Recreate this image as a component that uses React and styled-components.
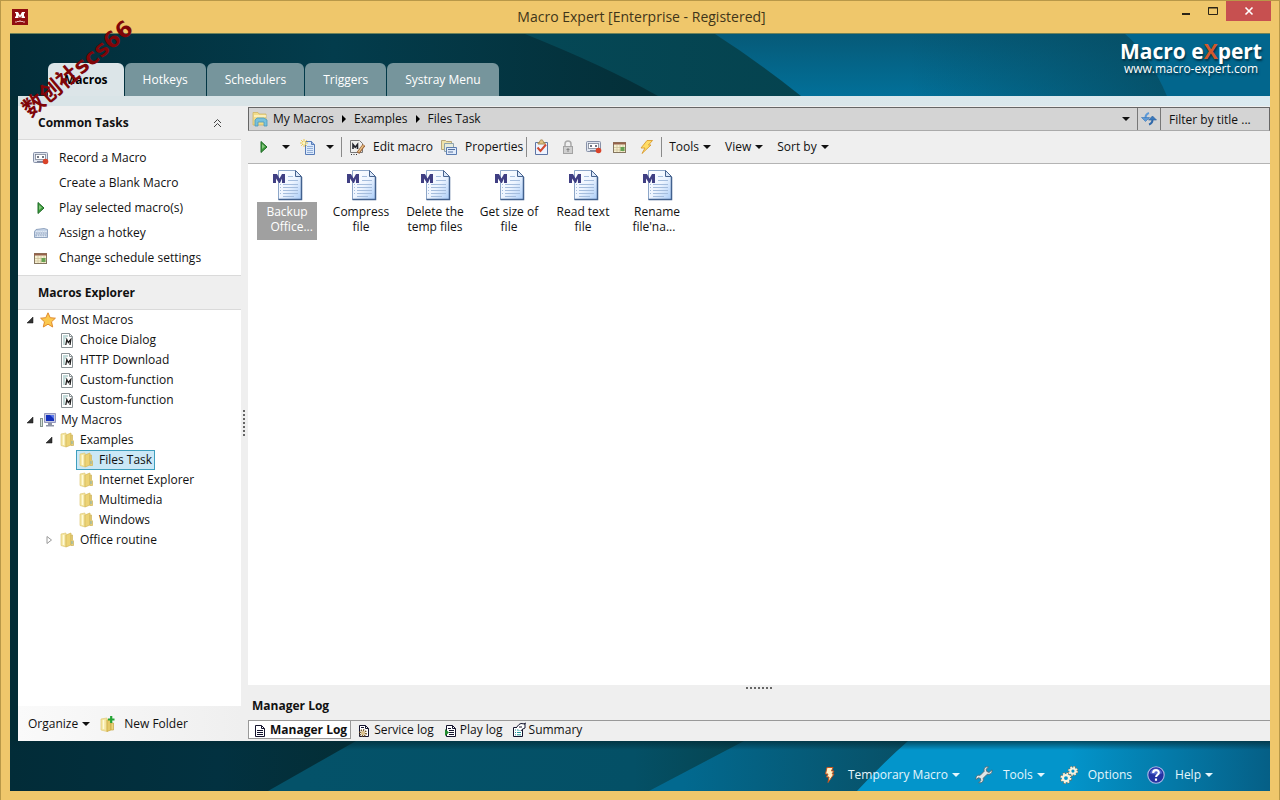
import React from "react";
import styled, { createGlobalStyle } from "styled-components";

const tabs = ["Macros", "Hotkeys", "Schedulers", "Triggers", "Systray Menu"];

const tasks = [
  { title: "Record a Macro", icon: "record" },
  { title: "Create a Blank Macro" },
  { title: "Play selected macro(s)", icon: "play" },
  { title: "Assign a hotkey", icon: "keyboard" },
  { title: "Change schedule settings", icon: "schedule" },
];

const tree = [
  { title: "Most Macros", icon: "star", level: 0, arrow: "open" },
  { title: "Choice Dialog", icon: "macro", level: 1 },
  { title: "HTTP Download", icon: "macro", level: 1 },
  { title: "Custom-function", icon: "macro", level: 1 },
  { title: "Custom-function", icon: "macro", level: 1 },
  { title: "My Macros", icon: "computer", level: 0, arrow: "open" },
  { title: "Examples", icon: "folder", level: 1, arrow: "open" },
  { title: "Files Task", icon: "folder", level: 2, selected: true },
  { title: "Internet Explorer", icon: "folder", level: 2 },
  { title: "Multimedia", icon: "folder", level: 2 },
  { title: "Windows", icon: "folder", level: 2 },
  { title: "Office routine", icon: "folder", level: 1, arrow: "closed" },
];

const files = [
  { lines: ["Backup", "\u00a0\u00a0\u00a0Office..."], selected: true },
  { lines: ["Compress", "file"] },
  { lines: ["Delete the", "temp files"] },
  { lines: ["Get size of", "file"] },
  { lines: ["Read text", "file"] },
  { lines: ["Rename", "file'na...\u00a0\u00a0"] },
];

const logs = [
  { title: "Manager Log", icon: "log" },
  { title: "Service log", icon: "serviceLog" },
  { title: "Play log", icon: "playLog" },
  { title: "Summary", icon: "summary" },
];

// every drawing sits on a 16x16 grid
const drawings = {
  record: (
    <>
      <rect x="0.5" y="2.5" width="14" height="10" rx="1" fill="#dfe4ee" stroke="#8791a8" />
      <rect x="2.500" y="4.500" width="10" height="5" fill="#fff" stroke="#6d7688" strokeWidth="0.700" />
      <path d="M4 7h2M9 7h2" stroke="#444b5c" strokeWidth="1.500" />
      <path d="M4 11.500h6" stroke="#7c8499" />
      <circle cx="12.500" cy="11.500" r="2.800" fill="#d9432a" />
    </>
  ),
  play: (
    <>
      <path d="M5 2.500v11l6-5.500z" fill="#3c9c3c" stroke="#1f6a26" />
      <path d="M6 5v5l3-2.500z" fill="#86c77e" />
    </>
  ),
  keyboard: (
    <>
      <path d="M3 4.500l8-1 3.500 1v8h-13v-6z" fill="#c6d5e8" stroke="#7d93b3" strokeWidth="0.800" />
      <path d="M3 7h11M2.500 9h11M4 11h9" stroke="#fff" strokeDasharray="1.500 0.800" />
      <path d="M3 8h11M2.500 10h11" stroke="#6e87ab" strokeWidth="0.800" strokeDasharray="1.500 0.800" />
    </>
  ),
  schedule: (
    <>
      <rect x="1.500" y="3.500" width="12" height="10" fill="#f6f0d2" stroke="#85765f" />
      <path d="M1 4.500h13" stroke="#96614b" strokeWidth="2" />
      <path d="M2 8.500h11M2 11h11M5 6v7M8 6v7M11 6v7" stroke="#cbbd95" strokeWidth="0.700" />
      <rect x="8.500" y="8" width="4" height="4" fill="#66a253" />
    </>
  ),
  star: (
    <path
      d="M8 0.800l2.200 4.900 5.200.500-3.900 3.600 1.200 5.200L8 12.200 3.300 15l1.200-5.200L.600 6.200l5.200-.500z"
      fill="#fbc94f"
      stroke="#e18a2c"
    />
  ),
  macro: (
    <>
      <path d="M2.500 1.500h8l3 3v11h-11z" fill="#fff" stroke="#8b9396" />
      <path d="M10.500 1.500v3h3" fill="none" stroke="#8b9396" />
      <path d="M4 4h5M4 6h3M4 8h2M4 10h2M4 12h2" stroke="#88b5b3" />
      <path d="M6.800 13l1-5.500 1.500 3 2.500-3-.8 5.500" fill="none" stroke="#202020" strokeWidth="1.300" />
    </>
  ),
  computer: (
    <>
      <rect x="0.500" y="6.500" width="2" height="8" fill="#d8e1dc" stroke="#86968e" />
      <path d="M4.500 1.500h11v9h-11z" fill="#c6c9e0" stroke="#9396bd" />
      <path d="M6 3h8v6H6z" fill="#1430bd" />
      <path d="M10 3h4v4z" fill="#5b78ea" />
      <path d="M8 11h4v2h2v1.500H6V13h2z" fill="#8e94a5" />
    </>
  ),
  folder: (
    <>
      <path d="M2 2l5-1v14l-5-1.500z" fill="#f5e6a0" stroke="#e0ca78" strokeWidth="0.700" />
      <path d="M7 3l5-2v12l-5 2z" fill="#ecd375" stroke="#d3b75a" strokeWidth="0.700" />
      <path d="M12 3h1.500v5l1 1v4.500H12z" fill="#e8d078" stroke="#cfb35a" strokeWidth="0.700" />
      <path d="M4.500 3v10" stroke="#fffad8" strokeWidth="1.500" />
      <path d="M13 9v3" stroke="#7fb1bd" />
    </>
  ),
  newFolder: (
    <>
      <path d="M1 3l6-1v13.500L1 14z" fill="#f5e6a0" stroke="#e0ca78" strokeWidth="0.700" />
      <path d="M7 4l4-1v11l-4 1.500z" fill="#e4c967" stroke="#caa83f" strokeWidth="0.700" />
      <path d="M11 7h2.500v7H11z" fill="#ead57a" stroke="#c5a643" strokeWidth="0.700" />
      <path d="M3.500 4v9" stroke="#fffad8" strokeWidth="1.500" />
      <path d="M8 3.500h6.500M11.200 0v7" stroke="#24a334" strokeWidth="2.200" />
    </>
  ),
  location: (
    <>
      <path d="M1 1.500h5l1 1.500h7v11H1z" fill="#f1dc8a" stroke="#cfb565" strokeWidth="0.800" />
      <path d="M2 5h12" stroke="#fff6c8" strokeWidth="1.500" />
      <path d="M3 15V9l2-2h7l3 2v6h-3v-4H6v4z" fill="#78c1dc" stroke="#4c9abc" strokeWidth="0.800" />
    </>
  ),
  newMacro: (
    <>
      <path d="M5.500 2.500h6l3 3v10h-9z" fill="#dceafc" stroke="#587cb8" />
      <path d="M11.500 2.500v3h3" fill="#9bb9e3" stroke="#587cb8" />
      <path d="M7 7.500h6M7 9.500h6M7 11.500h6M7 13.500h6" stroke="#93afd8" />
      <path d="M4 0v8M0 4h8M1.200 1.200l5.600 5.600M6.800 1.200L1.200 6.800" stroke="#eec84a" />
      <circle cx="4" cy="4" r="1.500" fill="#fff6bd" />
    </>
  ),
  editMacro: (
    <>
      <path d="M1.500 1.500h9l3 3v9h-12z" fill="#efefed" stroke="#777" />
      <path d="M4 10V5.500l2.200 2.800L8.500 5.500V10" fill="none" stroke="#24262d" strokeWidth="1.600" />
      <path d="M15 6l-6 8" stroke="#a06439" strokeWidth="3.200" />
      <path d="M14.500 6.300l-5 6.800" stroke="#eac889" strokeWidth="1.400" />
      <path d="M2 15.500h7" stroke="#333" strokeDasharray="1 1.500" />
    </>
  ),
  properties: (
    <>
      <path d="M.5 1.500h4l1 1h5v8H.5z" fill="#efe2aa" stroke="#b8a77b" />
      <path d="M3.500 4.500h9v8h-9z" fill="#e8ecdc" stroke="#8ea3ad" />
      <path d="M5.500 8.500h10v7h-10z" fill="#e0ebfa" stroke="#5c7db1" />
      <path d="M7 10.500h7M7 13h5" stroke="#54709f" />
    </>
  ),
  check: (
    <>
      <path d="M1.500 3.500h12v12h-12z" fill="#eef3ff" stroke="#5d75a5" />
      <path d="M4 3.500h1.500C5.500 0 9.500 0 9.500 3.500H11v1.500H4z" fill="#e2c386" stroke="#a78a51" />
      <path d="M3.500 8.500l3 3.500L12 5.500" fill="none" stroke="#d24931" strokeWidth="2" />
    </>
  ),
  lock: (
    <>
      <path d="M5 8V5a3 3 0 0 1 6 0v3" fill="none" stroke="#aaa" strokeWidth="1.500" />
      <rect x="3.500" y="7.500" width="9" height="7" fill="#cfcfcf" stroke="#a3a3a3" />
      <path d="M8 9v4M6.500 10.500h3" stroke="#858585" />
    </>
  ),
  bolt: (
    <path d="M9 1.500h5.500l-4 4.500H13L4 14.500 7 9H3z" fill="#ffdc65" stroke="#d89b2f" strokeWidth="0.900" />
  ),
  hotBolt: (
    <path d="M5 .5h6L9.500 4H12l-2 3h2l-6 8.500L7 10H4.500L6 7H3.500z" fill="#fff1c7" stroke="#c7531c" />
  ),
  refresh: (
    <>
      <path d="M4.500 7C4.500 4.500 5 3 8 2" fill="none" stroke="#5d9ad8" strokeWidth="2" />
      <path d="M.5 6.500h8l-4 4z" fill="#5d9ad8" stroke="#3773b5" strokeWidth="0.600" />
      <path d="M11.500 8.500c0 2.500-.5 4-3.500 5" fill="none" stroke="#2f68aa" strokeWidth="2" />
      <path d="M7.500 9h8l-4-4z" fill="#3a79bc" stroke="#285f9e" strokeWidth="0.600" />
    </>
  ),
  log: (
    <>
      <path d="M3.500 3.500h6l3 3v8h-9z" fill="#fff" stroke="#14142e" />
      <path d="M9.500 3.500v3h3" fill="none" stroke="#14142e" />
      <path d="M5 8.500h6M5 10.500h6M5 12.500h6" stroke="#14142e" />
    </>
  ),
  serviceLog: (
    <>
      <path d="M3.500 3.500h6l3 3v8h-9z" fill="#fff" stroke="#14142e" />
      <path d="M9.500 3.500v3h3M5 5.500h3" fill="none" stroke="#14142e" />
      <circle cx="7" cy="11" r="3" fill="#fff" stroke="#785b2c" strokeWidth="1.800" strokeDasharray="1.300 1" />
      <circle cx="7" cy="11" r="1.300" fill="none" stroke="#c59b44" />
    </>
  ),
  playLog: (
    <>
      <path d="M4.500 3.500h6l3 3v8h-9z" fill="#fff" stroke="#14142e" />
      <path d="M10.500 3.500v3h3M6 6.500h3M7 8.500h5M7 10.500h5M7 12.500h5" fill="none" stroke="#14142e" />
      <path d="M3 7v7l4-3.500z" fill="#1f8b2d" />
    </>
  ),
  summary: (
    <>
      <path d="M2.500 5.500h9v9h-9z" fill="#fff" stroke="#14142e" />
      <path d="M4 8h1M6 8h4M4 10.500h1M6 10.500h4M4 12.800h1M6 12.800h4" stroke="#23969b" />
      <path d="M5 6l3-3.500 2-1 4 .5v4l-3 1.500-1 1.500" fill="#fff" stroke="#14142e" />
      <path d="M8 5h3M13 2l2-1" stroke="#14142e" />
    </>
  ),
  wrench: (
    <path
      d="M15 3.500l-2.500 2.200-2-.8-.5-2L12 .8C9 0 7.500 2.500 8.200 4.600L4.600 8.300C2 7.500.3 9.500 1 12l2-1.500 1.800.5.300 2-1.800 1.900c3 .6 4.700-1.600 4-4l3.600-3.600C13.500 8 15.800 6 15 3.500z"
      fill="#dfe6e8"
      stroke="#55676f"
      strokeWidth="0.800"
    />
  ),
  gears: (
    <>
      <circle cx="5.300" cy="10.700" r="4" fill="none" stroke="#7d6c50" strokeWidth="2.600" strokeDasharray="2 1.140" />
      <circle cx="5.300" cy="10.700" r="4" fill="none" stroke="#f7f2df" strokeWidth="1.600" strokeDasharray="1.600 1.540" />
      <circle cx="5.300" cy="10.700" r="2.700" fill="none" stroke="#f7f2df" strokeWidth="2" />
      <circle cx="11.500" cy="4.500" r="3.500" fill="none" stroke="#7d6c50" strokeWidth="2.200" strokeDasharray="1.800 0.950" />
      <circle cx="11.500" cy="4.500" r="3.500" fill="none" stroke="#f7f2df" strokeWidth="1.400" strokeDasharray="1.400 1.350" />
      <circle cx="11.500" cy="4.500" r="2.300" fill="none" stroke="#f7f2df" strokeWidth="1.800" />
    </>
  ),
  help: (
    <>
      <circle cx="8" cy="8" r="7.300" fill="#2532a2" stroke="#aab6e6" />
      <path d="M2.500 6.500a5.700 5.700 0 0 1 11 0C10 8 6 8 2.500 6.500z" fill="#5669d0" />
      <path d="M5.500 6.200c0-3.400 5-3.300 5-.3 0 1.800-2.400 1.900-2.400 3.900M8 11v2" fill="none" stroke="#fff" strokeWidth="1.900" />
    </>
  ),
};

function Icon({ name, size = 16 }) {
  return (
    <Glyph $size={size} viewBox="0 0 16 16" aria-hidden="true">
      {drawings[name]}
    </Glyph>
  );
}

function Caret() {
  return (
    <CaretGlyph viewBox="0 0 8 4" aria-hidden="true">
      <path d="M0 0h8L4 4z" fill="currentColor" />
    </CaretGlyph>
  );
}

function HeaderBackdrop() {
  return (
    <Backdrop viewBox="0 0 1260 62" preserveAspectRatio="none" aria-hidden="true">
      <defs>
        <linearGradient id="headDark">
          <stop offset="0" stopColor="#022c38" />
          <stop offset="0.5" stopColor="#033c4c" />
          <stop offset="1" stopColor="#042f38" />
        </linearGradient>
        <linearGradient id="headMid">
          <stop offset="0" stopColor="#045062" />
          <stop offset="1" stopColor="#05434f" />
        </linearGradient>
        <linearGradient id="headBlue" x2="0" y2="1">
          <stop offset="0" stopColor="#065a78" />
          <stop offset="1" stopColor="#027099" />
        </linearGradient>
        <linearGradient id="headShade">
          <stop offset="0" stopColor="#064b60" stopOpacity="0" />
          <stop offset="1" stopColor="#064b60" stopOpacity="0.8" />
        </linearGradient>
      </defs>
      <path d="M0 0h1260v62H0z" fill="#02668d" />
      <path d="M0 0h1115q24 20 42 62H0z" fill="url(#headBlue)" />
      <path d="M900 0h215q24 20 42 62H900z" fill="url(#headShade)" />
      <path d="M0 0h705q45 29 86 62H0z" fill="url(#headMid)" />
      <path d="M0 0h515q80 32 133 62H0z" fill="url(#headDark)" />
    </Backdrop>
  );
}

function FooterBackdrop() {
  return (
    <Backdrop viewBox="0 0 1260 50" preserveAspectRatio="none" aria-hidden="true">
      <defs>
        <linearGradient id="footDark">
          <stop offset="0" stopColor="#022c38" />
          <stop offset="0.6" stopColor="#023140" />
          <stop offset="1" stopColor="#042e36" />
        </linearGradient>
        <linearGradient id="footMid">
          <stop offset="0.4" stopColor="#045269" />
          <stop offset="0.85" stopColor="#045066" />
          <stop offset="1" stopColor="#064450" />
        </linearGradient>
        <linearGradient id="footBlue">
          <stop offset="0.75" stopColor="#02698f" />
          <stop offset="1" stopColor="#085066" />
        </linearGradient>
        <linearGradient id="footBright">
          <stop offset="0.65" stopColor="#0395cb" />
          <stop offset="0.84" stopColor="#0395cb" />
          <stop offset="1" stopColor="#055f86" />
        </linearGradient>
        <linearGradient id="footEdge" x2="0" y2="1">
          <stop offset="0" stopColor="#032a35" stopOpacity="0.7" />
          <stop offset="1" stopColor="#032a35" stopOpacity="0" />
        </linearGradient>
      </defs>
      <path d="M0 0h1260v50H0z" fill="url(#footBright)" />
      <path d="M0 0h898q-24 21-51 50H0z" fill="url(#footBlue)" />
      <path d="M0 0h734l-95 50H0z" fill="url(#footMid)" />
      <path d="M0 0h346l-88 50H0z" fill="url(#footDark)" />
      <path d="M0 0h1260v9H0z" fill="url(#footEdge)" />
    </Backdrop>
  );
}

function FileIcon() {
  return (
    <FileGlyph viewBox="0 0 32 32" aria-hidden="true">
      <defs>
        <linearGradient id="paper" x2="1" y2="1">
          <stop offset="0" stopColor="#fff" />
          <stop offset="0.5" stopColor="#eef5ff" />
          <stop offset="1" stopColor="#a9ccf8" />
        </linearGradient>
      </defs>
      <path d="M7.500 1.500h17l6 6v23h-23z" fill="url(#paper)" stroke="#8da6c8" />
      <path d="M30.500 8v22.500h-23" fill="none" stroke="#42618e" strokeWidth="1.500" />
      <path d="M24.500 1.500v6h6z" fill="#dbe8fa" stroke="#48648f" />
      <path d="M17 7.500h5M17 11.500h10M12 15.500h15M12 18.500h15M12 21.500h15M12 24.500h15M12 27.500h11" stroke="#a5bddd" />
      <path d="M9 15.500h1M9 18.500h1M9 21.500h1M9 24.500h1" stroke="#a5bddd" />
      <path d="M2 5h4l2.500 4.500L11 5h3v9h-3V9.500L9 14H8L5 9.500V14H2z" fill="#403f83" />
    </FileGlyph>
  );
}

function Titlebar() {
  return (
    <TitleRow>
      <AppIcon viewBox="0 0 16 16" aria-hidden="true">
        <path d="M0 0h16v16H0z" fill="#900d10" />
        <path d="M3 3h3l2 3.500L10 3h3v1.200h-1v3.300h1V9H9.500V6.500L8 9 6.500 6.500V9H3V7.500h1V4.200H3z" fill="#fff" />
        <path d="M3 13h2l1-1 1 1 1-1.500L9 13l1-1 1 1h2" fill="none" stroke="#e9b5b5" />
      </AppIcon>
      <Title>Macro Expert [Enterprise - Registered]</Title>
      <WindowButtons>
        <WindowButton aria-label="Minimize">
          <svg width="10" height="10" aria-hidden="true">
            <path d="M1 8h8" stroke="#2a2417" strokeWidth="2" />
          </svg>
        </WindowButton>
        <WindowButton aria-label="Maximize">
          <svg width="10" height="10" aria-hidden="true">
            <path d="M.5 1.500h9v7h-9zM0 2h10" fill="none" stroke="#2a2417" />
          </svg>
        </WindowButton>
        <WindowButton $close aria-label="Close">
          <svg width="10" height="10" aria-hidden="true">
            <path d="M1.500 1.500l7 7M8.500 1.500l-7 7" stroke="#fff" strokeWidth="1.600" />
          </svg>
        </WindowButton>
      </WindowButtons>
    </TitleRow>
  );
}

function Sidebar() {
  return (
    <Side>
      <SideHeading>
        <h2>Common Tasks</h2>
        <Collapse aria-label="Collapse">
          <svg width="9" height="10" aria-hidden="true">
            <path d="M1 5l3.500-3.500L8 5M1 9l3.500-3.500L8 9" fill="none" stroke="#444" />
          </svg>
        </Collapse>
      </SideHeading>
      <TaskList>
        {tasks.map((task) => (
          <li key={task.title}>
            <Task href="#">
              <Icon name={task.icon} />
              {task.title}
            </Task>
          </li>
        ))}
      </TaskList>
      <SideHeading>
        <h2>Macros Explorer</h2>
      </SideHeading>
      <Tree>
        {tree.map((node, i) => (
          <TreeRow key={i} $level={node.level}>
            <Arrow viewBox="0 0 8 8" aria-hidden="true">
              {node.arrow === "open" && <path d="M7 1v6H1z" fill="#333" stroke="#111" strokeWidth="0.500" />}
              {node.arrow === "closed" && <path d="M2 .5v7L6.500 4z" fill="#fff" stroke="#999" />}
            </Arrow>
            <Node href="#" $selected={node.selected}>
              <Icon name={node.icon} />
              {node.title}
            </Node>
          </TreeRow>
        ))}
      </Tree>
      <Organize>
        <Tool $menu>Organize<Caret /></Tool>
        <Tool><Icon name="newFolder" />New Folder</Tool>
      </Organize>
    </Side>
  );
}

function Workspace() {
  return (
    <Work>
      <Address>
        <Icon name="location" />
        <Crumbs>
          <a href="#">My Macros</a>
          <CrumbArrow viewBox="0 0 4 8" aria-hidden="true">
            <path d="M0 0v8l4-4z" />
          </CrumbArrow>
          <a href="#">Examples</a>
          <CrumbArrow viewBox="0 0 4 8" aria-hidden="true">
            <path d="M0 0v8l4-4z" />
          </CrumbArrow>
          <a href="#">Files Task</a>
        </Crumbs>
        <AddressButton aria-label="Show locations">
          <Caret />
        </AddressButton>
        <AddressButton $line aria-label="Refresh">
          <Icon name="refresh" />
        </AddressButton>
        <Filter aria-label="Filter by title" placeholder="Filter by title ..." />
      </Address>
      <Toolbar>
        <Group $gap={10}>
          <Tool aria-label="Play"><Icon name="play" /></Tool>
          <Tool aria-label="Play options"><Caret /></Tool>
          <Tool aria-label="New macro"><Icon name="newMacro" /></Tool>
          <Tool aria-label="New options"><Caret /></Tool>
        </Group>
        <Group $gap={8} $tight>
          <Tool><Icon name="editMacro" />Edit macro</Tool>
          <Tool><Icon name="properties" />Properties</Tool>
        </Group>
        <Group $gap={10}>
          <Tool aria-label="Validate"><Icon name="check" /></Tool>
          <Tool aria-label="Lock"><Icon name="lock" /></Tool>
          <Tool aria-label="Record"><Icon name="record" /></Tool>
          <Tool aria-label="Schedule"><Icon name="schedule" /></Tool>
          <Tool aria-label="Trigger"><Icon name="bolt" /></Tool>
        </Group>
        <Group $gap={14}>
          <Tool $menu>Tools<Caret /></Tool>
          <Tool $menu>View<Caret /></Tool>
          <Tool $menu>Sort by<Caret /></Tool>
        </Group>
      </Toolbar>
      <Files>
        {files.map((file) => (
          <File key={file.lines[0]}>
            <FileIcon />
            <FileName $selected={file.selected}>
              {file.lines[0]}
              <br />
              {file.lines[1]}
            </FileName>
          </File>
        ))}
      </Files>
      <HandleRow>
        <Handle />
      </HandleRow>
      <LogTitle>Manager Log</LogTitle>
      <LogTabs>
        {logs.map((log, i) => (
          <LogTab key={log.title} $active={i === 0}>
            <Icon name={log.icon} />
            {log.title}
          </LogTab>
        ))}
      </LogTabs>
    </Work>
  );
}

function App() {
  return (
    <Window>
      <GlobalStyle />
      <Titlebar />
      <Frame>
        <Header>
          <HeaderBackdrop />
          <Tabs>
            {tabs.map((tab, i) => (
              <Tab key={tab} $active={i === 0}>
                {tab}
              </Tab>
            ))}
          </Tabs>
          <Brand>
            <BrandName>
              Macro e<em>X</em>pert
            </BrandName>
            <BrandLink href="#">www.macro-expert.com</BrandLink>
          </Brand>
        </Header>
        <Panel>
          <Strip />
          <Columns>
            <Sidebar />
            <SideSplitter>
              <Handle $vertical />
            </SideSplitter>
            <Workspace />
          </Columns>
        </Panel>
        <Footer>
          <FooterBackdrop />
          <FootButton><Icon name="hotBolt" />Temporary Macro<Caret /></FootButton>
          <FootButton><Icon name="wrench" size={18} />Tools<Caret /></FootButton>
          <FootButton><Icon name="gears" size={18} />Options</FootButton>
          <FootButton><Icon name="help" size={18} />Help<Caret /></FootButton>
        </Footer>
      </Frame>
      <Watermark>数创社scs66</Watermark>
    </Window>
  );
}

const GlobalStyle = createGlobalStyle`
  * {
    box-sizing: border-box;
  }
  body {
    margin: 0;
    background-color: #efc76b;
    color: #111;
    font: 12px/16px "Open Sans", "Noto Sans CJK SC", sans-serif;
  }
  button, input {
    font: inherit;
    color: inherit;
    background: none;
    border: none;
    outline: none;
    padding: 0;
  }
  a {
    color: inherit;
    text-decoration: none;
  }
  h1, h2, ul {
    margin: 0;
    padding: 0;
    list-style: none;
    font-size: 12px;
  }
  svg {
    display: block;
    flex: none;
  }
`;
const Window = styled.div`
  display: flex;
  flex-direction: column;
  min-height: 100vh;
  position: relative;
  border: 1px solid #b89848;
  border-bottom: none;
  overflow: hidden;
`;
const TitleRow = styled.div`
  display: grid;
  grid-template-columns: 1fr auto 1fr;
  align-items: center;
  height: 32px;
  padding: 0 8px 0 11px;
`;
const AppIcon = styled.svg`
  width: 16px;
  height: 16px;
`;
const Title = styled.h1`
  && {
    font-size: 14px;
    font-weight: 400;
    line-height: 20px;
    color: #3f3519;
  }
`;
const WindowButtons = styled.div`
  display: flex;
  align-self: start;
  justify-self: end;
`;
const WindowButton = styled.button`
  display: flex;
  align-items: center;
  justify-content: center;
  width: ${(props) => (props.$close ? "45px" : "27px")};
  height: 20px;
  background-color: ${(props) => (props.$close ? "#c75050" : "transparent")};
`;
const Frame = styled.div`
  display: flex;
  flex-direction: column;
  flex: 1;
  margin: 0 9px 9px;
  border-top: 1px solid #6f8259;
  background-color: #022c35;
`;
const Header = styled.header`
  display: flex;
  align-items: flex-end;
  justify-content: space-between;
  height: 62px;
  position: relative;
  padding: 0 8px 0 38px;
`;
const Backdrop = styled.svg`
  position: absolute;
  inset: 0;
  width: 100%;
  height: 100%;
`;
const Tabs = styled.nav`
  display: flex;
  gap: 1px;
  position: relative;
`;
const Tab = styled.button`
  height: 33px;
  padding: 0 ${(props) => (props.$active ? "16px" : "18px")};
  border-radius: 6px 6px 0 0;
  background-color: ${(props) => (props.$active ? "#dce5e8" : "#76959c")};
  color: ${(props) => (props.$active ? "#000" : "#fff")};
  font-weight: ${(props) => (props.$active ? 700 : 400)};
`;
const Brand = styled.div`
  display: flex;
  flex-direction: column;
  align-items: center;
  align-self: flex-start;
  position: relative;
  padding-top: 5px;
  color: #fff;
  text-shadow: 1px 2px 2px #033348;
`;
const BrandName = styled.span`
  font-size: 21px;
  font-weight: 700;
  line-height: 24px;

  em {
    font-style: normal;
    color: #d2592c;
  }
`;
const BrandLink = styled.a`
  line-height: 12px;
`;
const Panel = styled.main`
  display: flex;
  flex-direction: column;
  flex: 1;
  margin-left: 8px;
  background-color: #efefef;
`;
const Strip = styled.div`
  height: 10px;
  background: linear-gradient(to right, #d9e4e7 50%, #dbeaf0);
`;
const Columns = styled.div`
  display: flex;
  flex: 1;
`;
const Side = styled.aside`
  display: flex;
  flex-direction: column;
  width: 223px;
  background-color: #fff;
`;
const SideHeading = styled.div`
  display: flex;
  align-items: center;
  justify-content: space-between;
  height: 34px;
  padding: 0 19px 0 20px;
  background-color: #efefef;
  border-bottom: 1px solid #dadada;
`;
const Collapse = styled.button`
  display: flex;
`;
const TaskList = styled.ul`
  padding: 5px 15px;
  border-bottom: 1px solid #dadada;
`;
const Task = styled.a`
  display: flex;
  align-items: center;
  gap: 10px;
  height: 25px;
`;
const Tree = styled.ul`
  flex: 1;
  padding: 0 8px;
`;
const TreeRow = styled.li`
  display: flex;
  align-items: center;
  height: 20px;
  padding-left: ${(props) => props.$level * 19}px;
`;
const Arrow = styled.svg`
  width: 8px;
  height: 8px;
`;
const Node = styled.a`
  display: flex;
  align-items: center;
  gap: 5px;
  height: 20px;
  margin-left: 4px;
  padding: 0 2px 0 1px;
  border: 1px solid ${(props) => (props.$selected ? "#3f9fbe" : "transparent")};
  background-color: ${(props) => (props.$selected ? "#cbe8f6" : "transparent")};
`;
const SideSplitter = styled.div`
  display: flex;
  align-items: center;
  width: 7px;
  padding-left: 2px;
`;
const Handle = styled.div`
  width: ${(props) => (props.$vertical ? "2px" : "27px")};
  height: ${(props) => (props.$vertical ? "27px" : "2px")};
  background: repeating-linear-gradient(
    ${(props) => (props.$vertical ? "to bottom" : "to right")},
    #666 0 2px,
    transparent 2px 4px
  );
`;
const Organize = styled.div`
  display: flex;
  align-items: center;
  gap: 10px;
  height: 35px;
  padding-left: 10px;
  background: linear-gradient(to right, #fafafa, #efefef);
`;
const Work = styled.section`
  display: flex;
  flex-direction: column;
  flex: 1;
  min-width: 0;
`;
const Address = styled.div`
  display: flex;
  align-items: center;
  height: 24px;
  margin-top: 1px;
  padding-left: 3px;
  background-color: #d4d4d4;
  border: 1px solid #666;
  border-bottom-color: #aaa;
`;
const Crumbs = styled.nav`
  display: flex;
  align-items: center;
  gap: 8px;
  flex: 1;
  padding-left: 5px;
`;
const CrumbArrow = styled.svg`
  width: 4px;
  height: 8px;
`;
const AddressButton = styled.button`
  display: flex;
  align-items: center;
  justify-content: center;
  width: 23px;
  height: 22px;
  border-left: ${(props) => (props.$line ? "1px solid #777" : "none")};
`;
const Filter = styled.input`
  width: 109px;
  height: 22px;
  padding-left: 8px;
  border-left: 1px solid #777;

  &::placeholder {
    color: #111;
    opacity: 1;
  }
`;
const Toolbar = styled.div`
  display: flex;
  align-items: center;
  height: 33px;
  padding-left: 8px;
  border-bottom: 1px solid #b4b4b4;
`;
const Group = styled.div`
  display: flex;
  align-items: center;
  gap: ${(props) => props.$gap}px;
  height: 20px;
  padding: 0 ${(props) => (props.$tight ? "3px" : "7px")} 0 7px;
  border-left: 1px solid #8a8a8a;

  &:first-child {
    padding-left: 0;
    border-left: none;
  }
`;
const Tool = styled.button`
  display: flex;
  align-items: center;
  gap: ${(props) => (props.$menu ? "4px" : "8px")};
  white-space: nowrap;
`;
const Files = styled.ul`
  display: flex;
  flex-wrap: wrap;
  align-content: flex-start;
  gap: 14px;
  flex: 1;
  padding: 5px 9px;
  background-color: #fff;
`;
const File = styled.li`
  display: flex;
  flex-direction: column;
  align-items: center;
  width: 60px;
`;
const FileGlyph = styled.svg`
  width: 32px;
  height: 32px;
`;
const FileName = styled.span`
  width: 60px;
  height: 38px;
  margin-top: 1px;
  padding-top: 2px;
  line-height: 15px;
  text-align: center;
  white-space: nowrap;
  color: ${(props) => (props.$selected ? "#fff" : "#111")};
  background-color: ${(props) => (props.$selected ? "#a0a0a0" : "transparent")};
`;
const HandleRow = styled.div`
  display: flex;
  justify-content: center;
  padding: 2px 0;
`;
const LogTitle = styled.h2`
  padding: 7px 4px 6px;
  line-height: 16px;
`;
const LogTabs = styled.div`
  display: flex;
  gap: 2px;
  height: 21px;
  border-top: 1px solid #999;
`;
const LogTab = styled.button`
  display: flex;
  align-items: center;
  gap: 2px;
  height: 18px;
  padding: 0 3px;
  font-weight: ${(props) => (props.$active ? 700 : 400)};
  background-color: ${(props) => (props.$active ? "#fff" : "transparent")};
  border: ${(props) => (props.$active ? "1px solid #999" : "none")};
  border-top: none;
`;
const Footer = styled.footer`
  display: flex;
  align-items: center;
  justify-content: flex-end;
  gap: 15px;
  height: 50px;
  position: relative;
  padding: 18px 57px 0 0;
`;
const FootButton = styled.button`
  display: flex;
  align-items: center;
  gap: 4px;
  position: relative;
  color: #e4f6fc;

  svg:first-child {
    margin-right: 6px;
  }
`;
const Glyph = styled.svg`
  width: ${(props) => props.$size}px;
  height: ${(props) => props.$size}px;
`;
const CaretGlyph = styled.svg`
  width: 8px;
  height: 4px;
`;
const Watermark = styled.div`
  position: absolute;
  left: 9px;
  top: 54px;
  color: #800508;
  font: 700 22px/28px "DejaVu Sans", "Noto Sans CJK SC", sans-serif;
  white-space: nowrap;
  transform: rotate(-40deg);
  pointer-events: none;
`;
export default App;
